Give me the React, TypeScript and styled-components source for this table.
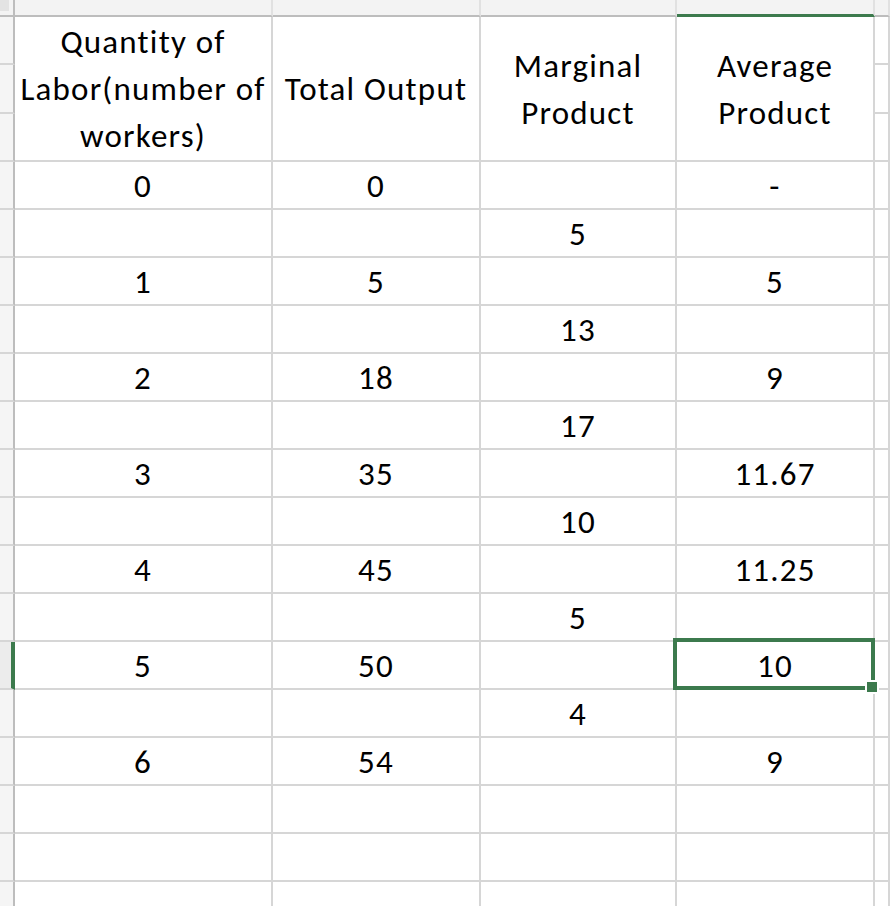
import React from 'react';
import styled, { createGlobalStyle } from 'styled-components';

const GREEN = '#3c7a4d';
const GRID = '#d6d6d6';
const HEAD_LINE = '#bdbdbd';
const FONT = 'Calibri, Carlito, Lato, "Liberation Sans", sans-serif';

const Global = createGlobalStyle`
  html, body { margin: 0; padding: 0; background: #fff; overflow: hidden; }
  body { font-family: ${FONT}; }
`;

const Sheet = styled.div`
  display: grid;
  grid-template-columns: 15px 258px 208px 196px 198px 1fr;
  grid-template-rows: 17px 48px 49px 48px repeat(16, 48px);
  width: 890px;
  height: 906px;
  overflow: hidden;
  font-family: ${FONT};
  font-size: 33px;
  letter-spacing: 1.2px;
  font-variant-ligatures: none;
  font-feature-settings: "liga" 0, "clig" 0;
  color: #000;
  background: #fff;
`;

const Corner = styled.div`
  box-sizing: border-box;
  background: #f3f3f3;
  border-right: 2px solid ${HEAD_LINE};
  border-bottom: 2px solid ${HEAD_LINE};
`;

const CornerMark = styled.div`
  width: 9px;
  height: 11px;
  background: #e3e3e3;
`;

const ColHead = styled.div<{ $selected?: boolean }>`
  box-sizing: border-box;
  background: #f3f3f3;
  border-right: 2px solid #e1e1e1;
  border-bottom: ${(p) => (p.$selected ? `3px solid ${GREEN}` : `2px solid ${HEAD_LINE}`)};
`;

const RowHead = styled.div<{ $selected?: boolean }>`
  box-sizing: border-box;
  background: ${(p) => (p.$selected ? '#ececec' : '#f5f5f5')};
  border-right: ${(p) => (p.$selected ? `4px solid ${GREEN}` : `2px solid ${HEAD_LINE}`)};
  border-bottom: 2px solid ${GRID};
`;

const Cell = styled.div`
  position: relative;
  box-sizing: border-box;
  border-right: 2px solid ${GRID};
  border-bottom: 2px solid ${GRID};
  display: flex;
  align-items: center;
  justify-content: center;
  padding-top: 3px;
  line-height: 1;
  white-space: nowrap;
`;

const HeaderCell = styled.div`
  grid-row: span 3;
  box-sizing: border-box;
  border-right: 2px solid ${GRID};
  border-bottom: 2px solid ${GRID};
  display: flex;
  flex-direction: column;
  align-items: center;
  justify-content: center;
  text-align: center;
  line-height: 47px;
  padding-top: 2px;
  white-space: nowrap;
`;

const Selection = styled.div`
  position: absolute;
  left: -4px;
  top: -4px;
  right: -2px;
  bottom: -2px;
  border: 4px solid ${GREEN};
  z-index: 2;
  pointer-events: none;
`;

const FillHandle = styled.div`
  position: absolute;
  right: -8px;
  bottom: -8px;
  width: 10px;
  height: 10px;
  background: ${GREEN};
  border: 2px solid #fff;
`;

const headers: string[][] = [
  ['Quantity of', 'Labor(number of', 'workers)'],
  ['Total Output'],
  ['Marginal', 'Product'],
  ['Average', 'Product'],
];

const rows: string[][] = [
  ['0', '0', '', '-'],
  ['', '', '5', ''],
  ['1', '5', '', '5'],
  ['', '', '13', ''],
  ['2', '18', '', '9'],
  ['', '', '17', ''],
  ['3', '35', '', '11.67'],
  ['', '', '10', ''],
  ['4', '45', '', '11.25'],
  ['', '', '5', ''],
  ['5', '50', '', '10'],
  ['', '', '4', ''],
  ['6', '54', '', '9'],
  ['', '', '', ''],
  ['', '', '', ''],
  ['', '', '', ''],
];

const SELECTED_ROW = 10;
const SELECTED_COL = 3;

export default function App() {
  return (
    <>
      <Global />
      <Sheet>
        <Corner>
          <CornerMark />
        </Corner>
        {[0, 1, 2, 3, 4].map((c) => (
          <ColHead key={`ch${c}`} $selected={c === SELECTED_COL} />
        ))}

        <RowHead />
        {headers.map((lines, i) => (
          <HeaderCell key={`h${i}`}>
            {lines.map((l, j) => (
              <span key={j}>{l}</span>
            ))}
          </HeaderCell>
        ))}
        <Cell />
        <RowHead />
        <Cell />
        <RowHead />
        <Cell />

        {rows.map((r, ri) => (
          <React.Fragment key={`r${ri}`}>
            <RowHead $selected={ri === SELECTED_ROW} />
            {r.map((v, ci) => (
              <Cell key={ci}>
                {v}
                {ri === SELECTED_ROW && ci === SELECTED_COL && (
                  <Selection>
                    <FillHandle />
                  </Selection>
                )}
              </Cell>
            ))}
            <Cell />
          </React.Fragment>
        ))}
      </Sheet>
    </>
  );
}
